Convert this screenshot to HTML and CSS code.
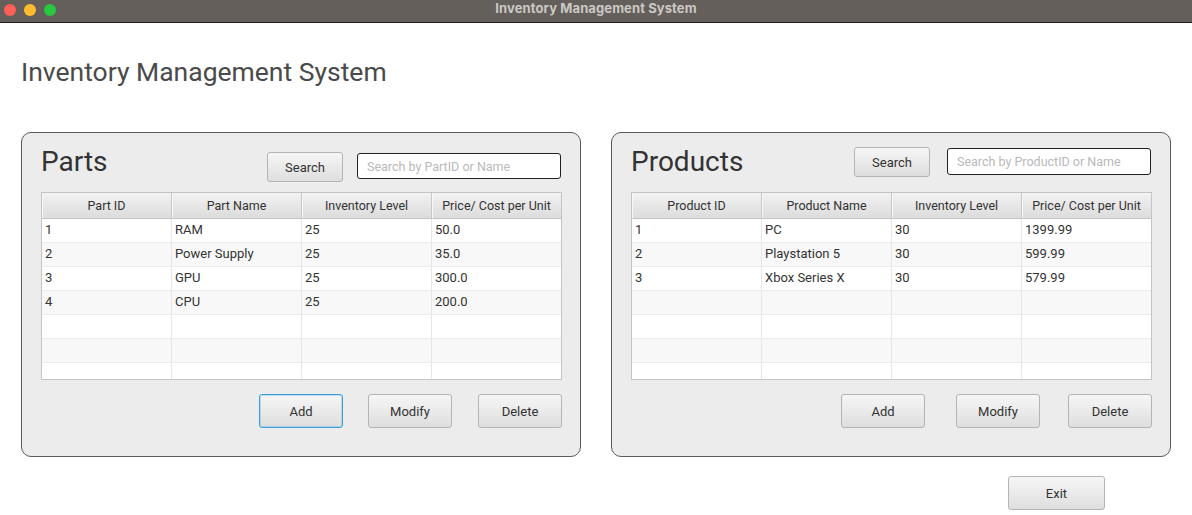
FILE: index.html
```html
<!DOCTYPE html>
<html>
<head>
<meta charset="utf-8">
<link rel="stylesheet" href="styles.css">
</head>
<body>
<div class="titlebar">
  <div class="lights">
    <span class="light red"></span>
    <span class="light yellow"></span>
    <span class="light green"></span>
  </div>
  <div class="wintitle">Inventory Management System</div>
</div>
<main class="content">
  <h1 class="heading">Inventory Management System</h1>
  <div class="panels">
    <section class="panel parts">
      <div class="panel-head">
        <h2 class="panel-title">Parts</h2>
        <button class="btn search-btn">Search</button>
        <input class="search-input" type="text" placeholder="Search by PartID or Name">
      </div>
      <div class="table">
        <div class="thead">
          <div class="th">Part ID</div>
          <div class="th">Part Name</div>
          <div class="th">Inventory Level</div>
          <div class="th">Price/ Cost per Unit</div>
        </div>
        <div class="tbody">
          <div class="tr"><div class="td">1</div><div class="td">RAM</div><div class="td">25</div><div class="td">50.0</div></div>
          <div class="tr"><div class="td">2</div><div class="td">Power Supply</div><div class="td">25</div><div class="td">35.0</div></div>
          <div class="tr"><div class="td">3</div><div class="td">GPU</div><div class="td">25</div><div class="td">300.0</div></div>
          <div class="tr"><div class="td">4</div><div class="td">CPU</div><div class="td">25</div><div class="td">200.0</div></div>
          <div class="tr"><div class="td"></div><div class="td"></div><div class="td"></div><div class="td"></div></div>
          <div class="tr"><div class="td"></div><div class="td"></div><div class="td"></div><div class="td"></div></div>
          <div class="tr"><div class="td"></div><div class="td"></div><div class="td"></div><div class="td"></div></div>
        </div>
      </div>
      <div class="actions">
        <button class="btn act focused">Add</button>
        <button class="btn act">Modify</button>
        <button class="btn act">Delete</button>
      </div>
    </section>
    <section class="panel products">
      <div class="panel-head">
        <h2 class="panel-title">Products</h2>
        <button class="btn search-btn">Search</button>
        <input class="search-input" type="text" placeholder="Search by ProductID or Name">
      </div>
      <div class="table">
        <div class="thead">
          <div class="th">Product ID</div>
          <div class="th">Product Name</div>
          <div class="th">Inventory Level</div>
          <div class="th">Price/ Cost per Unit</div>
        </div>
        <div class="tbody">
          <div class="tr"><div class="td">1</div><div class="td">PC</div><div class="td">30</div><div class="td">1399.99</div></div>
          <div class="tr"><div class="td">2</div><div class="td">Playstation 5</div><div class="td">30</div><div class="td">599.99</div></div>
          <div class="tr"><div class="td">3</div><div class="td">Xbox Series X</div><div class="td">30</div><div class="td">579.99</div></div>
          <div class="tr"><div class="td"></div><div class="td"></div><div class="td"></div><div class="td"></div></div>
          <div class="tr"><div class="td"></div><div class="td"></div><div class="td"></div><div class="td"></div></div>
          <div class="tr"><div class="td"></div><div class="td"></div><div class="td"></div><div class="td"></div></div>
          <div class="tr"><div class="td"></div><div class="td"></div><div class="td"></div><div class="td"></div></div>
        </div>
      </div>
      <div class="actions">
        <button class="btn act">Add</button>
        <button class="btn act">Modify</button>
        <button class="btn act">Delete</button>
      </div>
    </section>
  </div>
  <div class="exit-row">
    <button class="btn exit">Exit</button>
  </div>
</main>
</body>
</html>
```

FILE: styles.css
```css
* { box-sizing: border-box; }
html, body { margin: 0; padding: 0; background: #ffffff; }
body {
  font-family: Roboto, "Liberation Sans", sans-serif;
  color: #333333;
  width: 1192px;
  height: 515px;
  overflow: hidden;
}
.titlebar {
  height: 23px;
  background: #645f5a;
  border-bottom: 1px solid #1c1c1c;
  display: flex;
  align-items: center;
  justify-content: center;
  position: relative;
}
.lights {
  position: absolute;
  left: 4px;
  top: 4px;
  display: flex;
  gap: 8px;
}
.light { width: 12px; height: 12px; border-radius: 50%; display: block; }
.red { background: #fe5f57; }
.yellow { background: #febc2e; }
.green { background: #28c840; }
.wintitle {
  font-family: Inter, "Liberation Sans", sans-serif;
  font-size: 13px;
  font-weight: 700;
  color: #cbc8c5;
  letter-spacing: 0.1px;
  line-height: 16px;
  margin-top: -6px;
}
.content { padding: 0 0 0 21px; }
.heading {
  margin: 0;
  padding-top: 33px;
  font-size: 26.5px;
  font-weight: 400;
  line-height: 32px;
  color: #4a4a4a;
  height: 77px;
}
.panels {
  display: flex;
  gap: 30px;
  margin-top: 32px;
}
.panel {
  width: 560px;
  height: 325px;
  border: 1px solid #5a5a5a;
  border-radius: 10px;
  background: #ececec;
  padding: 0 18px 0 19px;
  display: flex;
  flex-direction: column;
}
.panel-head {
  height: 59px;
  display: flex;
  align-items: flex-start;
}
.panel-title {
  margin: 12px 0 0 0;
  font-size: 28px;
  font-weight: 400;
  line-height: 34px;
  color: #333333;
  flex: 1;
}
.btn {
  font-family: Roboto, "Liberation Sans", sans-serif;
  font-size: 13px;
  color: #333333;
  background: linear-gradient(#f6f6f6, #dedede);
  border: 1px solid #b4b4b4;
  border-radius: 3px;
  padding: 0;
  cursor: pointer;
}
.search-btn { width: 76px; height: 30px; }
.search-input {
  font-family: Roboto, "Liberation Sans", sans-serif;
  font-size: 12.5px;
  width: 204px;
  height: 26px;
  border: 1.5px solid #222222;
  border-radius: 3px;
  background: #ffffff;
  padding: 0 9px;
  outline: none;
}
.search-input::placeholder { color: #b9b9b9; }
.parts .search-btn { margin-top: 19px; margin-right: 14px; }
.parts .search-input { margin-top: 20px; margin-right: 1px; }
.products .search-btn { margin-top: 14px; margin-right: 17px; }
.products .search-input { margin-top: 15px; margin-right: 1px; height: 27px; }

.table {
  width: 521px;
  height: 188px;
  border: 1px solid #c4c4c4;
  background: #ffffff;
  overflow: hidden;
}
.thead {
  display: grid;
  grid-template-columns: 130px 130px 130px 129px;
  height: 26px;
  background: linear-gradient(#f2f2f2, #dcdcdc);
  border-bottom: 1px solid #c4c4c4;
}
.th {
  font-size: 12.5px;
  color: #333333;
  text-align: center;
  line-height: 25px;
  border-right: 1px solid #c8c8c8;
  box-shadow: inset 1px 0 0 #f8f8f8;
}
.th:last-child { border-right: none; }
.tbody { height: 160px; overflow: hidden; }
.tr {
  display: grid;
  grid-template-columns: 130px 130px 130px 129px;
  height: 24px;
  border-bottom: 1px solid #ececec;
}
.tr:nth-child(even) { background: #f8f8f8; }
.td {
  font-size: 13px;
  line-height: 22px;
  padding-left: 3px;
  color: #333333;
  border-right: 1px solid #e6e6e6;
  white-space: nowrap;
}
.td:last-child { border-right: none; }

.actions {
  display: flex;
  justify-content: flex-end;
  margin-top: 14px;
}
.act { width: 84px; height: 34px; }
.parts .act + .act { margin-left: 25px; }
.parts .act:last-child { margin-left: 26px; }
.products .act + .act { margin-left: 31px; }
.products .act:last-child { margin-left: 28px; }
.focused {
  border: 1px solid #3a9fd9;
  box-shadow: inset 0 0 0 1px rgba(120, 190, 235, 0.45);
}
.exit-row {
  display: flex;
  padding-left: 987px;
  margin-top: 19px;
}
.exit { width: 97px; height: 34px; }
```
